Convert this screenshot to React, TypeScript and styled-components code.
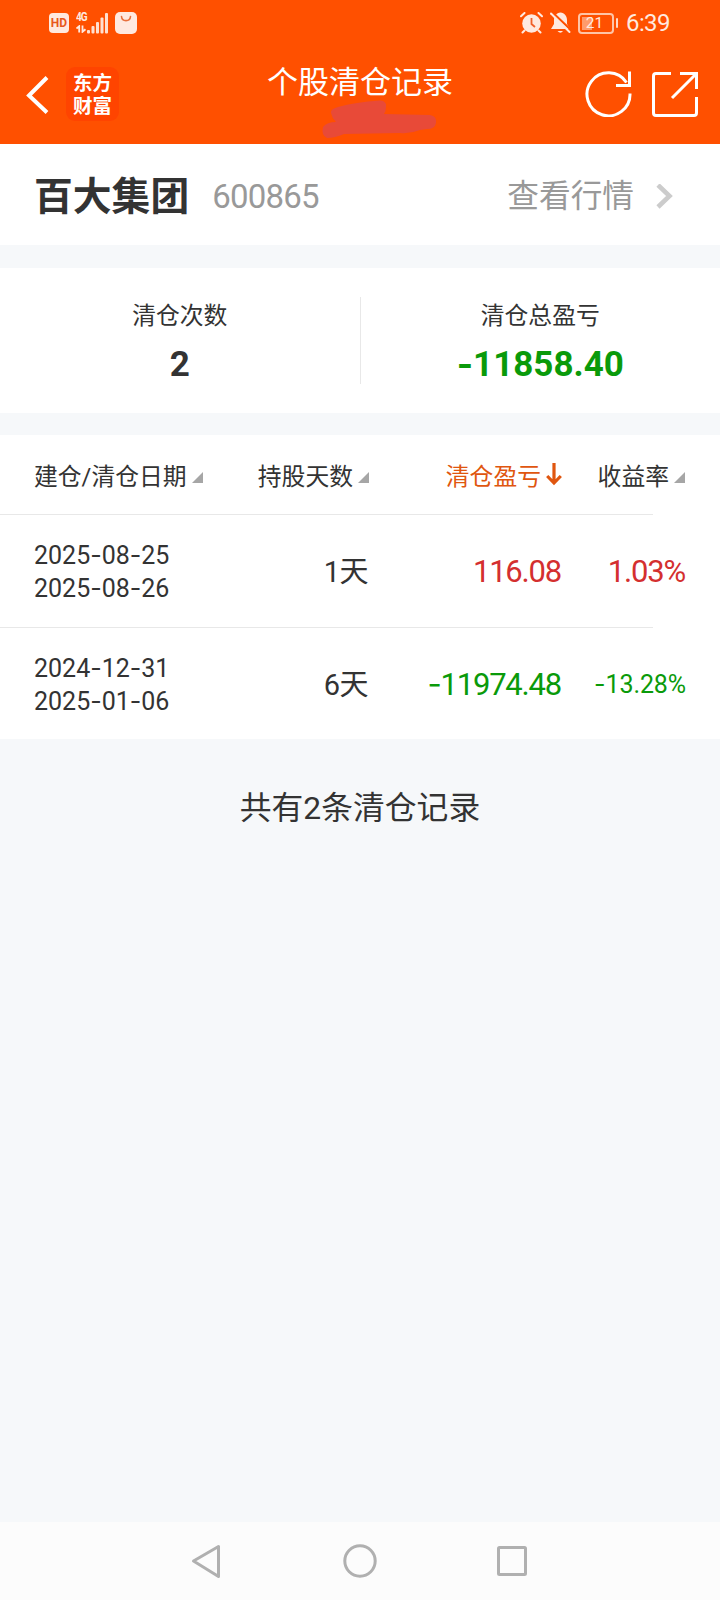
import React from 'react';
import styled, { createGlobalStyle } from 'styled-components';

const GlobalStyle = createGlobalStyle`
  * { box-sizing: border-box; }
  body {
    margin: 0;
    background: #f6f8fa;
    font-family: Roboto, "Noto Sans CJK SC", sans-serif;
    color: #333;
  }
  svg { display: block; flex: none; }
`;

const Screen = styled.div`
  display: flex;
  flex-direction: column;
  width: 720px;
  height: 1600px;
  overflow: hidden;
  background: #f6f8fa;
`;

const Header = styled.header`
  height: 144px;
  background: #ff5000;
  color: #fff;
`;

const StatusBar = styled.div`
  display: flex;
  justify-content: space-between;
  align-items: center;
  height: 46px;
  padding: 0 49px;
`;

const StatusGroup = styled.div`
  display: flex;
  align-items: center;
  height: 46px;
`;

const HdBadge = styled.span`
  width: 20px;
  height: 20px;
  margin-right: 7px;
  border-radius: 4px;
  background: #ffe9df;
  color: #e8581c;
  font-size: 12px;
  font-weight: 700;
  line-height: 20px;
  text-align: center;
`;

const Network = styled.div`
  display: flex;
  flex-direction: column;
  width: 11px;
  height: 21px;
  color: #ffe9df;
`;

const NetworkLabel = styled.span`
  height: 12px;
  font-size: 10px;
  font-weight: 700;
  line-height: 10px;
  letter-spacing: -1px;
  white-space: nowrap;
  transform: scaleY(1.2);
`;

const Battery = styled.div`
  display: flex;
  align-items: center;
  margin: 0 8px 0 7px;
`;

const BatteryBody = styled.div`
  width: 36px;
  height: 21px;
  border: 2px solid #ffc4a6;
  border-radius: 4px;
  background: linear-gradient(90deg, #ff9a6b 10px, transparent 10px) 2px 2px / 32px 13px no-repeat;
  color: #ffe9df;
  font-size: 15.5px;
  line-height: 17px;
  text-align: center;
  padding-right: 3px;
`;

const BatteryTip = styled.i`
  width: 2px;
  height: 10px;
  margin-left: 2px;
  border-radius: 1px;
  background: #ffd9c6;
`;

const Clock = styled.span`
  width: 45px;
  color: #ffe9df;
  font-size: 24px;
  letter-spacing: -0.6px;
  white-space: nowrap;
`;

const TitleBar = styled.div`
  display: grid;
  grid-template-columns: 240px 240px 240px;
  height: 98px;
`;

const TitleLeft = styled.div`
  display: flex;
  align-items: flex-start;
  padding: 21px 0 0 26px;
`;

const Logo = styled.div`
  width: 53px;
  height: 54px;
  margin-left: 17px;
  padding: 5px 0 0 7px;
  border-radius: 9px;
  background: #ff4400;
  font-size: 19.5px;
  font-weight: 700;
  line-height: 23px;
`;

const TitleCenter = styled.div`
  display: flex;
  flex-direction: column;
  align-items: center;
`;

const Title = styled.h1`
  height: 54px;
  margin: 0;
  padding-top: 15px;
  font-size: 31px;
  font-weight: 400;
  line-height: 44px;
  white-space: nowrap;
`;

const TitleRight = styled.div`
  display: flex;
  gap: 20px;
  padding: 24px 0 0 105px;
`;

const StockRow = styled.section`
  display: flex;
  align-items: center;
  height: 101px;
  padding: 5px 47px 0 34px;
  background: #fff;
`;

const StockName = styled.strong`
  font-size: 38.8px;
  line-height: 50px;
`;

const StockCode = styled.span`
  margin-left: 23px;
  color: #999;
  font-size: 33px;
  line-height: 50px;
  letter-spacing: -0.8px;
`;

const QuoteLink = styled.a`
  display: flex;
  align-items: center;
  gap: 22px;
  margin-left: auto;
  color: #999;
  font-size: 31.7px;
  line-height: 50px;
`;

const Stats = styled.section`
  display: flex;
  height: 145px;
  margin: 23px 0 22px;
  background: #fff;
`;

const Stat = styled.div`
  display: flex;
  flex: 1;
  flex-direction: column;
  align-items: center;
  padding-top: 30px;
`;

const StatDivider = styled.i`
  width: 1px;
  height: 87px;
  margin-top: 29px;
  background: #e8e8e8;
`;

const StatLabel = styled.span`
  font-size: 23.8px;
  line-height: 36px;
`;

const StatValue = styled.strong<{ $color?: string }>`
  margin-top: 9px;
  color: ${(p) => p.$color ?? '#333'};
  font-size: 35px;
  line-height: 44px;
`;

const Table = styled.section`
  background: #fff;
`;

const columns = `
  display: grid;
  grid-template-columns: 190px 146px 192px 124px;
  align-items: center;
`;

const HeadRow = styled.div`
  ${columns}
  height: 79px;
  padding: 4px 0 0 34px;
`;

const HeadCell = styled.div<{ $active?: boolean }>`
  display: flex;
  align-items: center;
  justify-content: flex-end;
  color: ${(p) => (p.$active ? '#e0560f' : '#333')};
  font-size: 23.8px;
  line-height: 36px;
  white-space: nowrap;

  &:first-child { justify-content: flex-start; }
`;

const SortMark = styled.svg`
  margin: 1px 0 0 5px;
`;

const Rule = styled.div`
  width: 653px;
  height: 1px;
  background: #e8e8e8;
`;

const Row = styled.div<{ $height: number }>`
  ${columns}
  height: ${(p) => p.$height}px;
  padding: 2px 0 0 34px;
`;

const Dates = styled.div`
  font-size: 25px;
  line-height: 33px;
`;

const Days = styled.div`
  padding-right: 2px;
  font-size: 29px;
  letter-spacing: -0.5px;
  line-height: 40px;
  text-align: right;
`;

const Amount = styled.div<{ $color: string; $small?: boolean }>`
  padding-right: ${(p) => (p.$small ? 0 : 1)}px;
  color: ${(p) => p.$color};
  font-size: ${(p) => (p.$small ? 25 : 31)}px;
  letter-spacing: ${(p) => (p.$small ? -0.1 : -1.2)}px;
  line-height: 40px;
  text-align: right;
  white-space: nowrap;
`;

const Dash = styled.span`
  font-family: Inter, sans-serif;
  line-height: 0;
`;

const Summary = styled.p`
  margin: 47px 0 0;
  font-size: 31.8px;
  line-height: 44px;
  text-align: center;
`;

const NavBar = styled.nav`
  display: flex;
  align-items: center;
  height: 78px;
  margin-top: auto;
  padding-left: 190px;
  background: #fcfcfc;
`;

const RED = '#d42f2f';
const GREEN = '#0a9a0a';

const Num = ({ text }: { text: string }) => (
  <>
    {text.split('-').map((part, i) => (
      <React.Fragment key={i}>
        {i > 0 && <Dash>-</Dash>}
        {part}
      </React.Fragment>
    ))}
  </>
);

const Triangle = () => (
  <SortMark width="12" height="11" viewBox="0 0 12 11">
    <path d="M11 0V11H0Z" fill="#a6a6a6" />
  </SortMark>
);

const records = [
  { open: '2025-08-25', close: '2025-08-26', days: '1天', profit: '116.08', rate: '1.03%', color: RED, height: 112 },
  { open: '2024-12-31', close: '2025-01-06', days: '6天', profit: '-11974.48', rate: '-13.28%', color: GREEN, height: 111 },
];

export default function App() {
  return (
    <Screen>
      <GlobalStyle />
      <Header>
        <StatusBar>
          <StatusGroup>
            <HdBadge>HD</HdBadge>
            <Network>
              <NetworkLabel>4G</NetworkLabel>
              <svg width="11" height="8" viewBox="0 0 11 8" stroke="#ffe9df" strokeWidth="1.8" fill="none">
                <path d="M0.5 3.5L3.2 1.2V7.5M6.5 0.5V6.8L9.5 4.2" />
              </svg>
            </Network>
            <svg width="22" height="21" viewBox="0 0 22 21" fill="#ffe0d0">
              <rect x="0" y="17" width="3" height="3.5" rx="1" />
              <rect x="4.5" y="13" width="3" height="7.5" rx="1" />
              <rect x="9" y="9" width="3" height="11.5" rx="1" />
              <rect x="13.5" y="4.5" width="3" height="16" rx="1" />
              <rect x="18" y="0" width="3" height="20.5" rx="1" />
            </svg>
            <svg width="22" height="22" viewBox="0 0 22 22" style={{ marginLeft: 6 }}>
              <rect width="22" height="22" rx="5" fill="#ffe9df" />
              <path d="M6.5 4.5C7 10 15 10 15.5 4.5" fill="none" stroke="#e8703c" strokeWidth="1.6" strokeLinecap="round" />
            </svg>
          </StatusGroup>
          <StatusGroup>
            <svg width="23" height="22" viewBox="0 0 23 22" fill="none" stroke="#ffe9df">
              <circle cx="11.5" cy="11.5" r="9.3" fill="#ffe9df" stroke="none" />
              <path d="M1 4.3L4.5 1M22 4.3L18.5 1M4.5 18.5L2.5 20.5M18.5 18.5L20.5 20.5" strokeWidth="2" strokeLinecap="round" />
              <path d="M11.5 6V12L15 15" stroke="#f0602a" strokeWidth="1.8" />
            </svg>
            <svg width="21" height="22" viewBox="0 0 21 22" style={{ marginLeft: 7 }}>
              <path d="M10.5 0.5C14.5 1 17 4 17 8V12L20 17H1L4 12V8C4 4 6.5 1 10.5 0.5Z" fill="#ffe9df" />
              <path d="M7.5 19H13Q10.5 22.5 7.5 19Z" fill="#ffe9df" />
              <path d="M2.5 0.5L21 18" stroke="#ff5000" strokeWidth="2.2" />
              <path d="M1 1.5L19.5 20" stroke="#ffe9df" strokeWidth="1.9" strokeLinecap="round" />
            </svg>
            <Battery>
              <BatteryBody>21</BatteryBody>
              <BatteryTip />
            </Battery>
            <Clock>6:39</Clock>
          </StatusGroup>
        </StatusBar>
        <TitleBar>
          <TitleLeft>
            <svg width="23" height="40" viewBox="0 0 23 40" style={{ marginTop: 8 }}>
              <path d="M21 2.5L3 20.5L21 37.5" fill="none" stroke="#fff" strokeWidth="4" />
            </svg>
            <Logo>东方<br />财富</Logo>
          </TitleLeft>
          <TitleCenter>
            <Title>个股清仓记录</Title>
            <svg width="240" height="44" viewBox="240 100 240 44">
              <path
                d="M331 113Q330 109 338 107Q355 102 380 100.5Q387 101 386 107Q386 111 384 114L430 115Q437 116 436 123Q435 129 427 129L420 130Q410 134 400 133L344 134Q335 138 327 138Q321 135 323 127Q327 122 336 122Q332 118 331 113Z"
                fill="#e84a38"
              />
            </svg>
          </TitleCenter>
          <TitleRight>
            <svg width="47" height="47" viewBox="0 0 47 47" fill="none" stroke="#fff" strokeWidth="3">
              <path d="M45 23.5A21.5 21.5 0 1 1 41.5 12.5M44.5 1.5V15.5H31" />
            </svg>
            <svg width="46" height="47" viewBox="0 0 46 47" fill="none" stroke="#fff" strokeWidth="3">
              <path d="M19 3.5H4Q1.5 3.5 1.5 6V43Q1.5 45.5 4 45.5H42Q44.5 45.5 44.5 43V27M28 3.5H44.5V19M44 4L20 28" />
            </svg>
          </TitleRight>
        </TitleBar>
      </Header>

      <StockRow>
        <StockName>百大集团</StockName>
        <StockCode>600865</StockCode>
        <QuoteLink>
          查看行情
          <svg width="17" height="26" viewBox="0 0 17 26">
            <path d="M2 1L13.5 12L2 23" fill="none" stroke="#ccc" strokeWidth="4.6" />
          </svg>
        </QuoteLink>
      </StockRow>

      <Stats>
        <Stat>
          <StatLabel>清仓次数</StatLabel>
          <StatValue>2</StatValue>
        </Stat>
        <StatDivider />
        <Stat>
          <StatLabel>清仓总盈亏</StatLabel>
          <StatValue $color={GREEN}><Num text="-11858.40" /></StatValue>
        </Stat>
      </Stats>

      <Table>
        <HeadRow>
          <HeadCell>建仓/清仓日期<Triangle /></HeadCell>
          <HeadCell>持股天数<Triangle /></HeadCell>
          <HeadCell $active>
            清仓盈亏
            <svg width="16" height="23" viewBox="0 0 16 23" style={{ margin: '0 0 5px 5px' }} fill="none" stroke="#e0560f" strokeWidth="3.2">
              <path d="M8 0V20M1.2 13L8 20L14.8 13" />
            </svg>
          </HeadCell>
          <HeadCell>收益率<Triangle /></HeadCell>
        </HeadRow>
        {records.map((r) => (
          <React.Fragment key={r.open}>
            <Rule />
            <Row $height={r.height}>
              <Dates>
                <div><Num text={r.open} /></div>
                <div><Num text={r.close} /></div>
              </Dates>
              <Days>{r.days}</Days>
              <Amount $color={r.color}><Num text={r.profit} /></Amount>
              <Amount $color={r.color} $small={r.rate.length > 6}><Num text={r.rate} /></Amount>
            </Row>
          </React.Fragment>
        ))}
      </Table>

      <Summary>共有2条清仓记录</Summary>

      <NavBar>
        <svg width="340" height="40" viewBox="0 0 340 40" fill="none" stroke="#b0b0b0" strokeWidth="3" strokeLinejoin="round">
          <path d="M3.5 20L28.5 5.5V35.5Z" />
          <circle cx="170" cy="20" r="15.2" />
          <rect x="308.5" y="6.5" width="27" height="27" rx="1" />
        </svg>
      </NavBar>
    </Screen>
  );
}
